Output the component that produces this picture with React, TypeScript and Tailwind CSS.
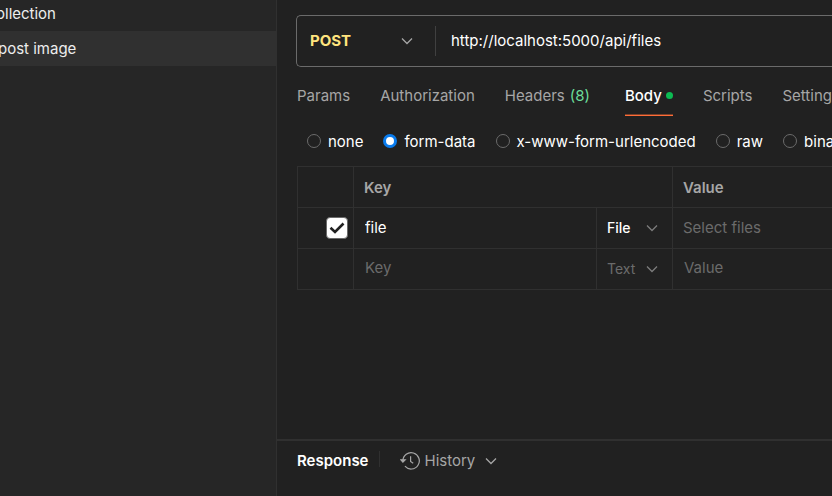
import React from "react";

function Chevron({ className = "" }: { className?: string }) {
  return (
    <svg
      className={`pointer-events-none h-3 w-3 shrink-0 ${className}`}
      viewBox="0 0 12 12"
      fill="none"
      stroke="currentColor"
      strokeWidth="1.3"
      aria-hidden="true"
    >
      <path d="M1 3.5 6 8.5l5-5" />
    </svg>
  );
}

function HistoryIcon() {
  return (
    <svg
      className="h-5 w-5 shrink-0"
      viewBox="0 0 20 20"
      fill="none"
      stroke="currentColor"
      strokeWidth="1.2"
      aria-hidden="true"
    >
      <path d="M2.9 10.5V9.8a8.2 8.2 0 1 1 2 5.4" />
      <path d="M.8 8.8h4.4l-2.3 2.4z" fill="currentColor" />
      <path d="M10.6 5.2v5.2l2.6 1.8" />
    </svg>
  );
}

function Sidebar() {
  return (
    <nav
      aria-label="Collections"
      className="w-[277px] shrink-0 overflow-hidden border-r border-[#303030] bg-[#262626]"
    >
      <ul className="-mt-1 text-[#ededed]">
        <li className="flex h-[35px] items-center">
          <button className="-ml-1 whitespace-nowrap">ollection</button>
        </li>
        <li className="flex h-[35px] items-center bg-[#303030]">
          <button className="-ml-0.5 whitespace-nowrap">post image</button>
        </li>
      </ul>
    </nav>
  );
}

function UrlBar() {
  return (
    <div className="pt-[15px] pl-[19px]">
      <div className="flex h-[52px] items-center rounded-l-[5px] border border-r-0 border-[#6b6b6b]">
        <div className="relative flex h-[30px] w-[139px] shrink-0 items-center border-r border-[#404040]">
          <select
            aria-label="Method"
            defaultValue="POST"
            className="w-full appearance-none bg-transparent pl-[13px] font-bold text-[#ffe47e] outline-none"
          >
            <option>POST</option>
            <option>GET</option>
          </select>
          <Chevron className="absolute right-[22px] text-[#a6a6a6]" />
        </div>
        <input
          aria-label="Request URL"
          defaultValue="http://localhost:5000/api/files"
          className="min-w-0 flex-1 bg-transparent pl-[15px] text-white outline-none"
        />
      </div>
    </div>
  );
}

function Tab({ active = false, children }: { active?: boolean; children: React.ReactNode }) {
  const tone = active ? "text-white" : "text-[#a6a6a6]";
  const line = active ? "border-[#7d4029] bg-[#ff6c37]" : "border-transparent bg-transparent";
  return (
    <button
      role="tab"
      aria-selected={active}
      className={`flex h-10 shrink-0 flex-col whitespace-nowrap ${tone}`}
    >
      <span className="flex flex-1 items-center pt-px">{children}</span>
      <span className={`h-0.5 w-full border-t ${line}`} />
    </button>
  );
}

function Tabs() {
  return (
    <div role="tablist" className="mt-[9px] flex gap-[30px] overflow-hidden pl-5">
      <Tab>Params</Tab>
      <Tab>Authorization</Tab>
      <Tab>
        Headers <span className="mr-[5px] ml-[5px] text-[#6bdd9a]">(8)</span>
      </Tab>
      <Tab active>
        <span className="font-medium">Body</span>
        <span className="ml-1 h-[7px] w-[7px] rounded-full bg-[#0cbb52]" />
      </Tab>
      <Tab>Scripts</Tab>
      <Tab>Settings</Tab>
    </div>
  );
}

const bodyTypes = ["none", "form-data", "x-www-form-urlencoded", "raw", "binary"];

function BodyTypes() {
  return (
    <div className="flex h-[50px] items-center gap-5 overflow-hidden pt-0.5 pl-[30px] text-white">
      {bodyTypes.map((type) => (
        <label key={type} className="flex shrink-0 items-center gap-[7px]">
          <input
            type="radio"
            name="body-type"
            defaultChecked={type === "form-data"}
            className="mb-0.5 h-[14px] w-[14px] appearance-none rounded-full border border-[#6b6b6b] checked:border-[3px] checked:border-[#097bed] checked:bg-white"
          />
          {type}
        </label>
      ))}
    </div>
  );
}

const cell = "border-r border-b border-[#303030] p-0";
const lastCell = "border-b border-[#303030] p-0";
const field = "w-full bg-transparent text-white outline-none placeholder:text-[#6b6b6b]";

function TypeSelect({ label, value, tone }: { label: string; value: string; tone: string }) {
  return (
    <div className="relative flex items-center">
      <select
        aria-label={label}
        defaultValue={value}
        className={`w-full appearance-none bg-transparent pl-[10px] text-sm outline-none ${tone}`}
      >
        <option>File</option>
        <option>Text</option>
      </select>
      <Chevron className="absolute right-[14px] text-[#7d7d7d]" />
    </div>
  );
}

function FormTable() {
  return (
    <div className="pl-5">
      <table className="w-full table-fixed border-separate border-spacing-0 border-t border-l border-[#303030] text-left">
        <colgroup>
          <col className="w-14" />
          <col className="w-[243px]" />
          <col className="w-[76px]" />
          <col />
        </colgroup>
        <thead>
          <tr className="h-[41px] text-[#a6a6a6]">
            <td className={cell} />
            <th colSpan={2} className={`${cell} font-semibold`}>
              <div className="pt-0.5 pl-[10px]">Key</div>
            </th>
            <th className={`${lastCell} font-semibold`}>
              <div className="pt-0.5 pl-[10px]">Value</div>
            </th>
          </tr>
        </thead>
        <tbody>
          <tr className="h-[41px]">
            <td className={cell}>
              <div className="relative ml-7 flex h-[22px] w-[22px] items-center justify-center">
                <input
                  type="checkbox"
                  aria-label="Enable file"
                  defaultChecked
                  className="h-[22px] w-[22px] appearance-none rounded-[4px] border border-[#6b6b6b] checked:bg-white"
                />
                <svg
                  className="pointer-events-none absolute h-4 w-4"
                  viewBox="0 0 16 16"
                  fill="none"
                  stroke="#212121"
                  strokeWidth="2.6"
                  aria-hidden="true"
                >
                  <path d="M1.5 7.8 6 12l8.5-8.5" />
                </svg>
              </div>
            </td>
            <td className={cell}>
              <input aria-label="Key 1" defaultValue="file" className={`${field} pl-[11px]`} />
            </td>
            <td className={cell}>
              <TypeSelect label="Type 1" value="File" tone="font-medium text-white" />
            </td>
            <td className={lastCell}>
              <button className="pl-[10px] text-[#6b6b6b]">Select files</button>
            </td>
          </tr>
          <tr className="h-[41px]">
            <td className={cell} />
            <td className={cell}>
              <input aria-label="Key 2" placeholder="Key" className={`${field} pb-0.5 pl-[11px]`} />
            </td>
            <td className={cell}>
              <TypeSelect label="Type 2" value="Text" tone="text-[#6b6b6b]" />
            </td>
            <td className={lastCell}>
              <input aria-label="Value 2" placeholder="Value" className={`${field} pb-0.5 pl-[11px]`} />
            </td>
          </tr>
        </tbody>
      </table>
    </div>
  );
}

function ResponseBar() {
  return (
    <footer className="mt-auto flex h-[57px] shrink-0 items-start border-t-2 border-[#303030] pt-[10px] pl-5">
      <h2 className="font-semibold text-white">Response</h2>
      <span className="ml-[11px] h-4 w-px self-start bg-[#303030]" />
      <button className="ml-5 flex items-center gap-1 text-[#a6a6a6]">
        <HistoryIcon />
        History
        <Chevron className="ml-[6px]" />
      </button>
    </footer>
  );
}

export default function App() {
  return (
    <div className="flex h-screen overflow-hidden bg-[#212121] font-['Inter','Liberation_Sans',sans-serif] text-[15px] leading-5">
      <Sidebar />
      <main className="flex min-w-0 flex-1 flex-col">
        <UrlBar />
        <Tabs />
        <BodyTypes />
        <FormTable />
        <ResponseBar />
      </main>
    </div>
  );
}
